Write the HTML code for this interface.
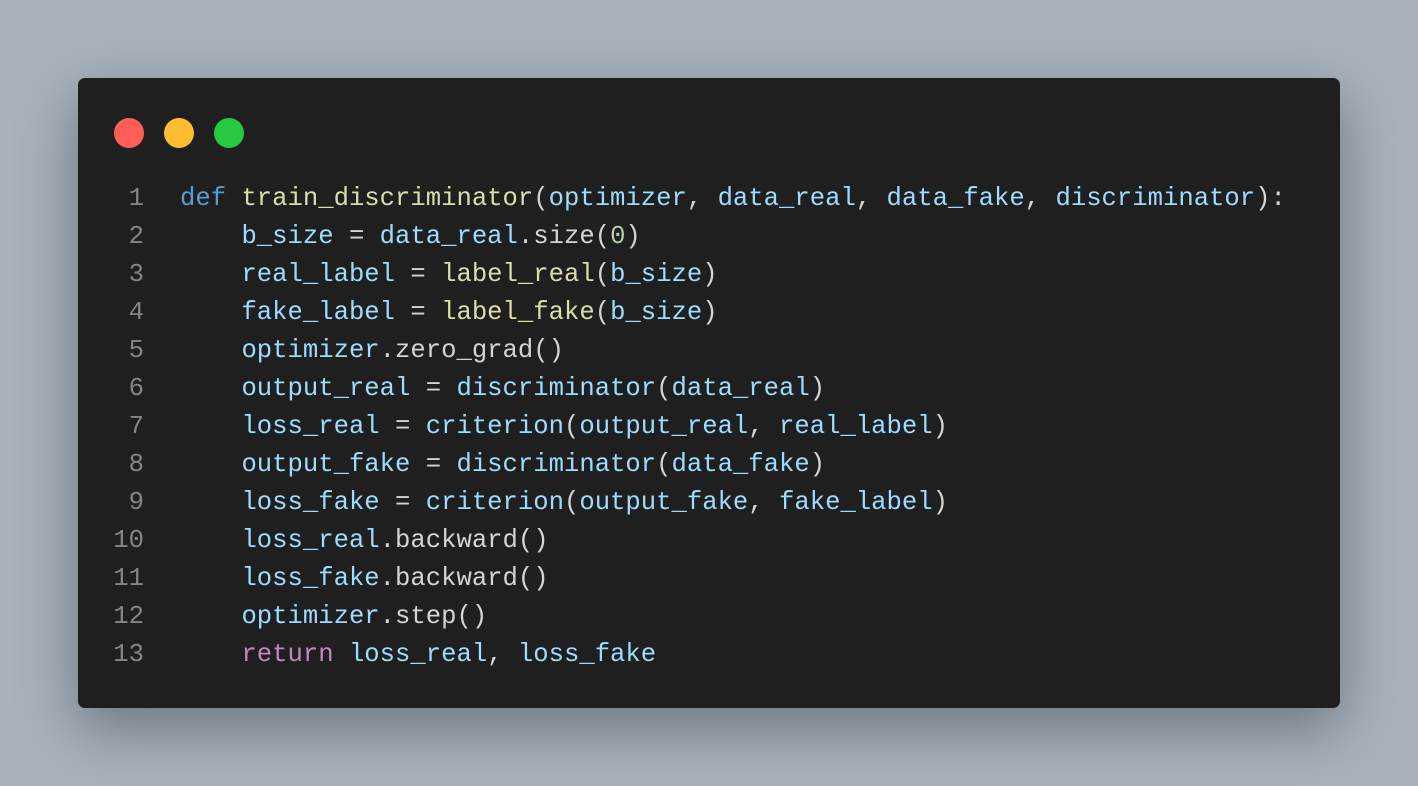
<!DOCTYPE html>
<html><head><style>
html,body{margin:0;width:1418px;height:786px;overflow:hidden;background:#a7b2bd;}
.win{position:absolute;left:78px;top:78px;width:1262px;height:630px;background:#1f1f1f;border-radius:7px;box-shadow:0 20px 60px rgba(0,0,0,.35);}
.dot{position:absolute;top:40px;width:30px;height:30px;border-radius:50%;}
pre{position:absolute;left:0;top:102px;margin:0;font-family:"Liberation Mono",monospace;font-size:25.6px;line-height:38px;color:#d4d4d4;}
.n{display:inline-block;width:66px;text-align:right;color:#858585;margin-right:36px;}
.k{color:#569cd6}.f{color:#dcdcaa}.v{color:#9cdcfe}.m{color:#b5cea8}.r{color:#c586c0}
</style></head><body>
<div class="win">
<div class="dot" style="left:36px;background:#ff5f57"></div>
<div class="dot" style="left:86px;background:#febc2e"></div>
<div class="dot" style="left:136px;background:#28c840"></div>
<pre><span class="n">1</span><span class="k">def</span> <span class="f">train_discriminator</span>(<span class="v">optimizer</span>, <span class="v">data_real</span>, <span class="v">data_fake</span>, <span class="v">discriminator</span>):
<span class="n">2</span>    <span class="v">b_size</span> = <span class="v">data_real</span>.size(<span class="m">0</span>)
<span class="n">3</span>    <span class="v">real_label</span> = <span class="f">label_real</span>(<span class="v">b_size</span>)
<span class="n">4</span>    <span class="v">fake_label</span> = <span class="f">label_fake</span>(<span class="v">b_size</span>)
<span class="n">5</span>    <span class="v">optimizer</span>.zero_grad()
<span class="n">6</span>    <span class="v">output_real</span> = <span class="v">discriminator</span>(<span class="v">data_real</span>)
<span class="n">7</span>    <span class="v">loss_real</span> = <span class="v">criterion</span>(<span class="v">output_real</span>, <span class="v">real_label</span>)
<span class="n">8</span>    <span class="v">output_fake</span> = <span class="v">discriminator</span>(<span class="v">data_fake</span>)
<span class="n">9</span>    <span class="v">loss_fake</span> = <span class="v">criterion</span>(<span class="v">output_fake</span>, <span class="v">fake_label</span>)
<span class="n">10</span>    <span class="v">loss_real</span>.backward()
<span class="n">11</span>    <span class="v">loss_fake</span>.backward()
<span class="n">12</span>    <span class="v">optimizer</span>.step()
<span class="n">13</span>    <span class="r">return</span> <span class="v">loss_real</span>, <span class="v">loss_fake</span></pre>
</div>
</body></html>
